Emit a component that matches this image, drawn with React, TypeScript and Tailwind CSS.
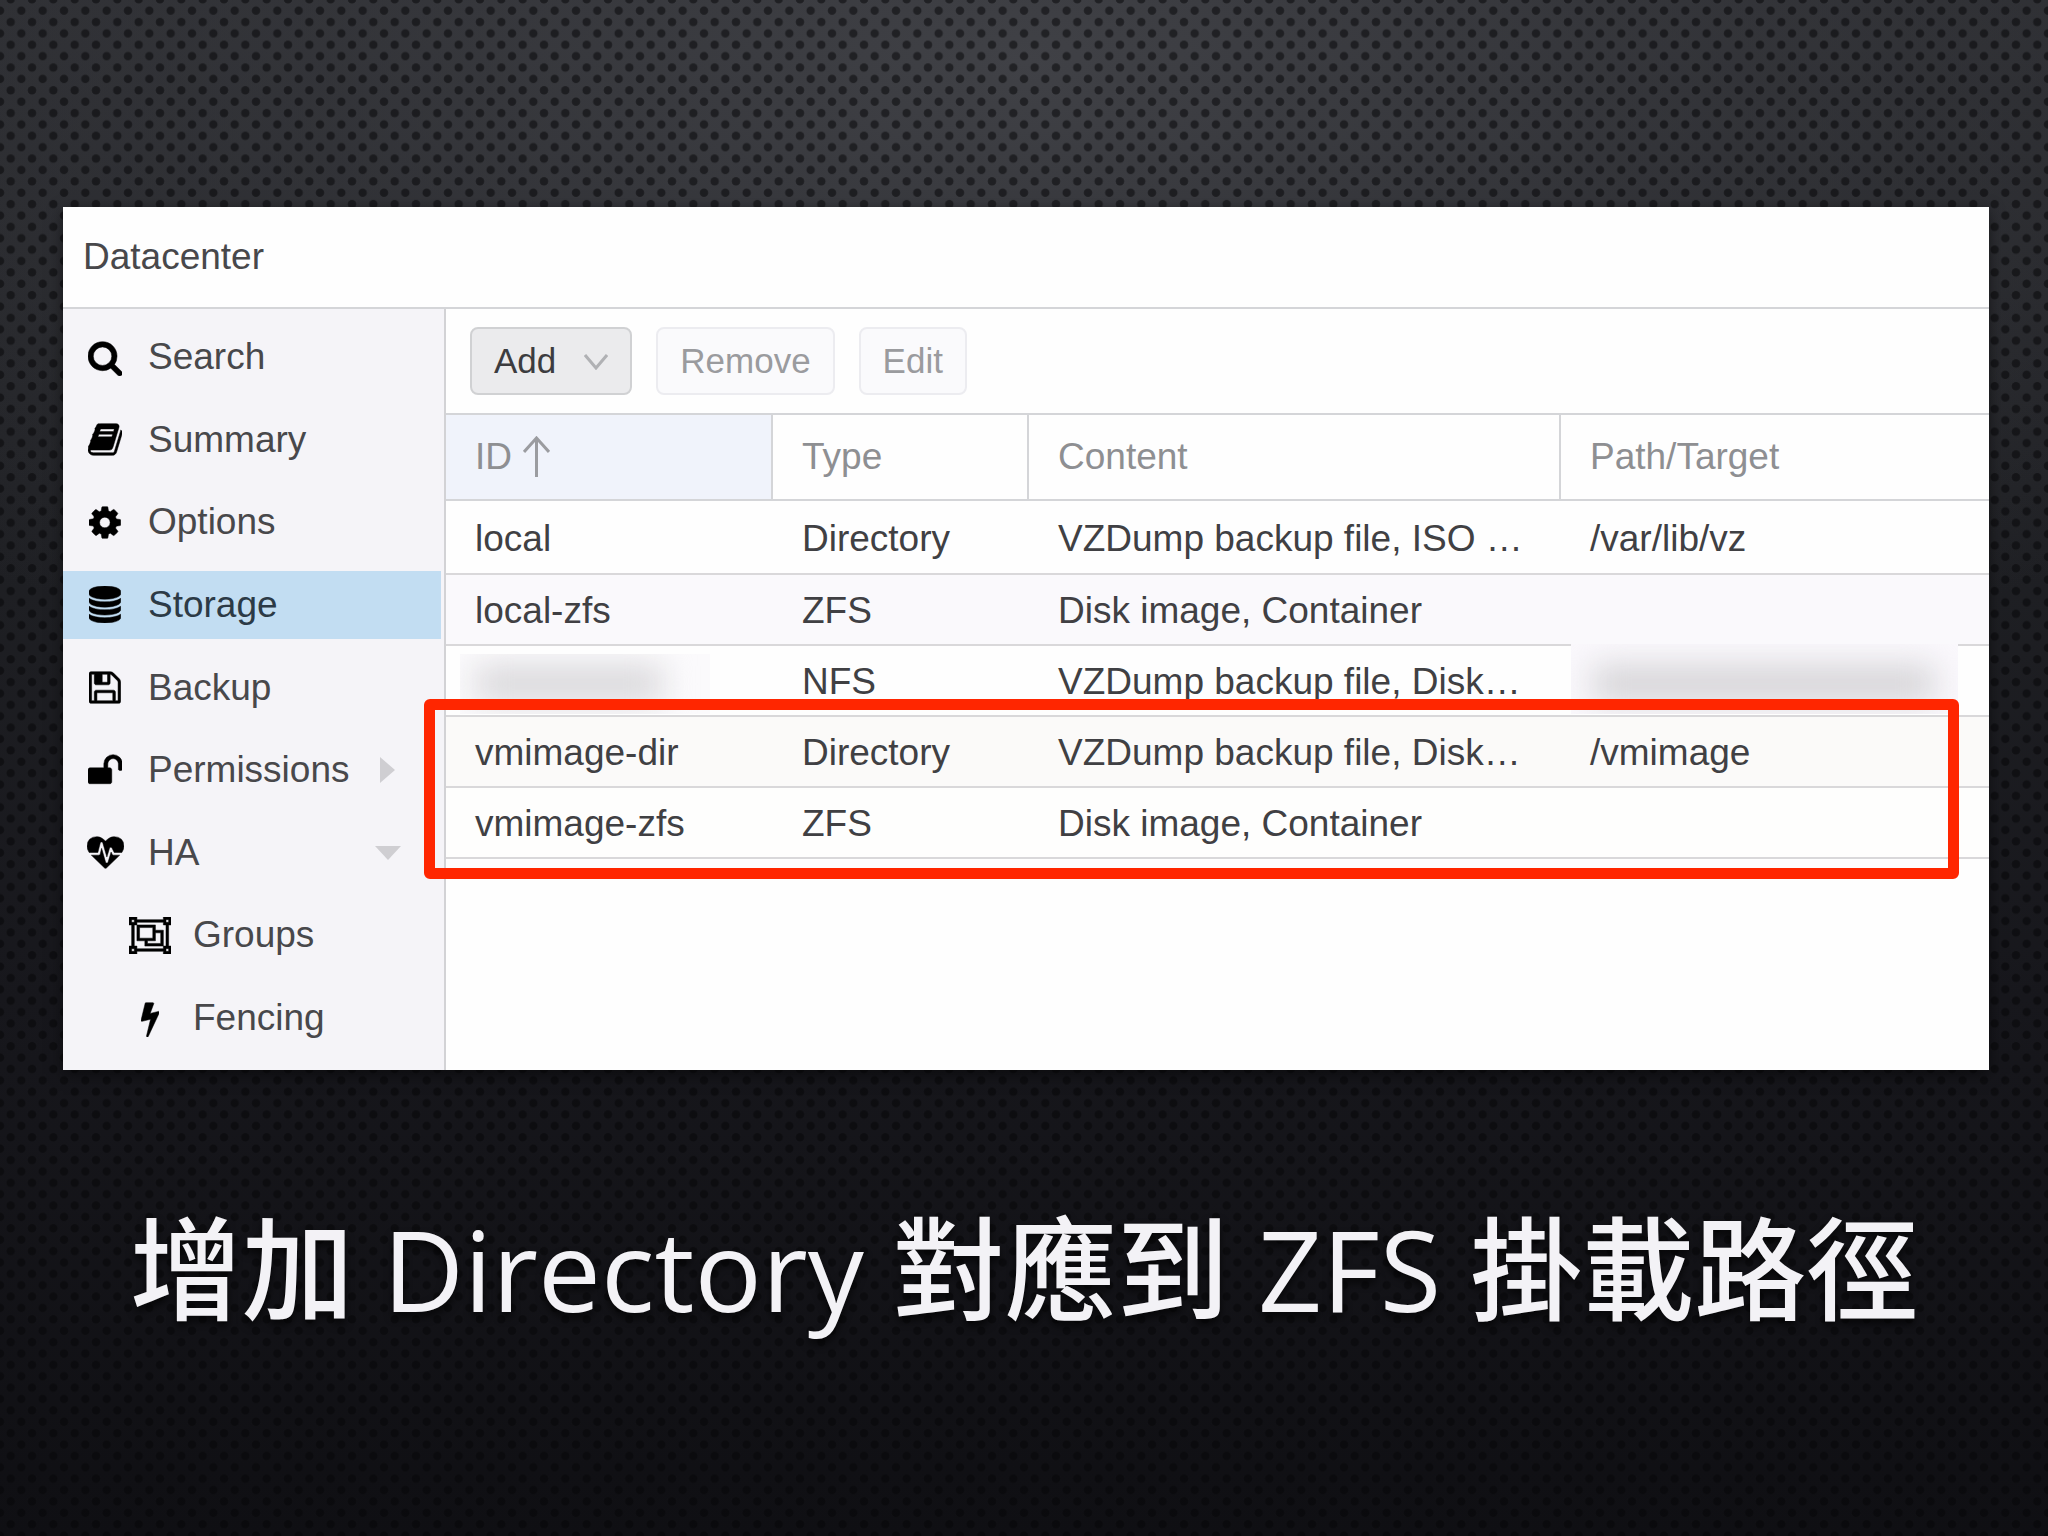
import React from 'react';

type Icon = React.FC<{ className?: string }>;

interface NavItem {
  label: string;
  icon: Icon;
  child?: boolean;
  active?: boolean;
  arrow?: 'right' | 'down';
}

// Font Awesome 4 outlines use a y-up coordinate system, hence the flip
const glyph = (d: string, width: number) => {
  const Glyph: Icon = ({ className }) => (
    <svg viewBox={`0 -1536 ${width} 1792`} height={37} width={(37 * width) / 1792} className={className} fill="currentColor" stroke="currentColor" strokeWidth="24" aria-hidden="true">
      <path transform="scale(1,-1)" d={d} />
    </svg>
  );
  return Glyph;
};

const SearchIcon = glyph('M1152 704q0 185 -131.5 316.5t-316.5 131.5t-316.5 -131.5t-131.5 -316.5t131.5 -316.5t316.5 -131.5t316.5 131.5t131.5 316.5zM1664 -128q0 -52 -38 -90t-90 -38q-54 0 -90 38l-343 342q-179 -124 -399 -124q-143 0 -273.5 55.5t-225 150t-150 225t-55.5 273.5t55.5 273.5t150 225t225 150t273.5 55.5t273.5 -55.5t225 -150t150 -225t55.5 -273.5q0 -220 -124 -399l343 -343q37 -37 37 -90z', 1664);
const BookIcon = glyph('M1639 1058q40 -57 18 -129l-275 -906q-19 -64 -76.5 -107.5t-122.5 -43.5h-923q-77 0 -148.5 53.5t-99.5 131.5q-24 67 -2 127q0 4 3 27t4 37q1 8 -3 21.5t-3 19.5q2 11 8 21t16.5 23.5t16.5 23.5q23 38 45 91.5t30 91.5q3 10 0.5 30t-0.5 28q3 11 17 28t17 23q21 36 42 92t25 90q1 9 -2.5 32t0.5 28q4 13 22 30.5t22 22.5q19 26 42.5 84.5t27.5 96.5q1 8 -3 25.5t-2 26.5q2 8 9 18t18 23t17 21q8 12 16.5 30.5t15 35t16 36t19.5 32t26.5 23.5t36 11.5t47.5 -5.5l-1 -3q38 9 51 9h761q74 0 114 -56t18 -130l-274 -906q-36 -119 -71.5 -153.5t-128.5 -34.5h-869q-27 0 -38 -15q-11 -16 -1 -43q24 -70 144 -70h923q29 0 56 15.5t35 41.5l300 987q7 22 5 57q38 -15 59 -43zM575 1056q-4 -13 2 -22.5t20 -9.5h608q13 0 25.5 9.5t16.5 22.5l21 64q4 13 -2 22.5t-20 9.5h-608q-13 0 -25.5 -9.5t-16.5 -22.5zM492 800q-4 -13 2 -22.5t20 -9.5h608q13 0 25.5 9.5t16.5 22.5l21 64q4 13 -2 22.5t-20 9.5h-608q-13 0 -25.5 -9.5t-16.5 -22.5z', 1664);
const CogIcon = glyph('M1024 640q0 106 -75 181t-181 75t-181 -75t-75 -181t75 -181t181 -75t181 75t75 181zM1536 749v-222q0 -12 -8 -23t-20 -13l-185 -28q-19 -54 -39 -91q35 -50 107 -138q10 -12 10 -25t-9 -23q-27 -37 -99 -108t-94 -71q-12 0 -26 9l-138 108q-44 -23 -91 -38q-16 -136 -29 -186q-7 -28 -36 -28h-222q-14 0 -24.5 8.5t-11.5 21.5l-28 184q-49 16 -90 37l-141 -107q-10 -9 -25 -9q-14 0 -25 11q-126 114 -165 168q-7 10 -7 23q0 12 8 23q15 21 51 66.5t54 70.5q-27 50 -41 99l-183 27q-13 2 -21 12.5t-8 23.5v222q0 12 8 23t19 13l186 28q14 46 39 92q-40 57 -107 138q-10 12 -10 24q0 10 9 23q26 36 98.5 107.5t94.5 71.5q13 0 26 -10l138 -107q44 23 91 38q16 136 29 186q7 28 36 28h222q14 0 24.5 -8.5t11.5 -21.5l28 -184q49 -16 90 -37l142 107q9 9 24 9q13 0 25 -10q129 -119 165 -170q7 -8 7 -22q0 -12 -8 -23q-15 -21 -51 -66.5t-54 -70.5q26 -50 41 -98l183 -28q13 -2 21 -12.5t8 -23.5z', 1536);
const DatabaseIcon = glyph('M768 768q237 0 443 43t325 127v-170q0 -69 -103 -128t-280 -93.5t-385 -34.5t-385 34.5t-280 93.5t-103 128v170q119 -84 325 -127t443 -43zM768 0q237 0 443 43t325 127v-170q0 -69 -103 -128t-280 -93.5t-385 -34.5t-385 34.5t-280 93.5t-103 128v170q119 -84 325 -127t443 -43zM768 384q237 0 443 43t325 127v-170q0 -69 -103 -128t-280 -93.5t-385 -34.5t-385 34.5t-280 93.5t-103 128v170q119 -84 325 -127t443 -43zM768 1536q208 0 385 -34.5t280 -93.5t103 -128v-128q0 -69 -103 -128t-280 -93.5t-385 -34.5t-385 34.5t-280 93.5t-103 128v128q0 69 103 128t280 93.5t385 34.5z', 1536);
const FloppyIcon = glyph('M384 0h768v384h-768v-384zM1280 0h128v896q0 14 -10 38.5t-20 34.5l-281 281q-10 10 -34 20t-39 10v-416q0 -40 -28 -68t-68 -28h-576q-40 0 -68 28t-28 68v416h-128v-1280h128v416q0 40 28 68t68 28h832q40 0 68 -28t28 -68v-416zM896 928v320q0 13 -9.5 22.5t-22.5 9.5h-192q-13 0 -22.5 -9.5t-9.5 -22.5v-320q0 -13 9.5 -22.5t22.5 -9.5h192q13 0 22.5 9.5t9.5 22.5zM1536 896v-928q0 -40 -28 -68t-68 -28h-1344q-40 0 -68 28t-28 68v1344q0 40 28 68t68 28h928q40 0 88 -20t76 -48l280 -280q28 -28 48 -76t20 -88z', 1536);
const UnlockIcon = glyph('M1664 960v-256q0 -26 -19 -45t-45 -19h-64q-26 0 -45 19t-19 45v256q0 106 -75 181t-181 75t-181 -75t-75 -181v-192h96q40 0 68 -28t28 -68v-576q0 -40 -28 -68t-68 -28h-960q-40 0 -68 28t-28 68v576q0 40 28 68t68 28h672v192q0 185 131.5 316.5t316.5 131.5t316.5 -131.5t131.5 -316.5z', 1664);
const HeartbeatIcon = glyph('M1280 512h305q-5 -6 -10 -10.5t-9 -7.5l-3 -4l-623 -600q-18 -18 -44 -18t-44 18l-624 602q-5 2 -21 20h369q22 0 39.5 13.5t22.5 34.5l70 281l190 -667q6 -20 23 -33t39 -13q21 0 38 13t23 33l146 485l56 -112q18 -35 57 -35zM1792 940q0 -145 -103 -300h-369l-111 221q-8 17 -25.5 27t-36.5 8q-45 -5 -56 -46l-129 -430l-196 686q-6 20 -23.5 33t-39.5 13t-39 -13.5t-22 -34.5l-116 -464h-423q-103 155 -103 300q0 220 127 344t351 124q62 0 126.5 -21.5t120 -58t95.5 -68.5t76 -68q36 36 76 68t95.5 68.5t120 58t126.5 21.5q224 0 351 -124t127 -344z', 1792);
const GroupIcon = glyph('M2048 1152h-128v-1024h128v-384h-384v128h-1280v-128h-384v384h128v1024h-128v384h384v-128h1280v128h384v-384zM1792 1408v-128h128v128h-128zM128 1408v-128h128v128h-128zM256 -128v128h-128v-128h128zM1664 0v128h128v1024h-128v128h-1280v-128h-128v-1024h128v-128h1280zM1920 -128v128h-128v-128h128zM1280 896h384v-768h-896v256h-384v768h896v-256zM512 512h640v512h-640v-512zM1536 256v512h-256v-384h-384v-128h640z', 2048);
const BoltIcon = glyph('M885 970q18 -20 7 -44l-540 -1157q-13 -25 -42 -25q-4 0 -14 2q-17 5 -25.5 19t-4.5 30l197 808l-406 -101q-4 -1 -12 -1q-18 0 -31 11q-18 15 -13 39l201 825q4 14 16 23t28 9h328q19 0 32 -12.5t13 -29.5q0 -8 -5 -18l-171 -463l396 98q8 2 12 2q19 0 34 -15z', 896);

const navItems: NavItem[] = [
  { label: 'Search', icon: SearchIcon },
  { label: 'Summary', icon: BookIcon },
  { label: 'Options', icon: CogIcon },
  { label: 'Storage', icon: DatabaseIcon, active: true },
  { label: 'Backup', icon: FloppyIcon },
  { label: 'Permissions', icon: UnlockIcon, arrow: 'right' },
  { label: 'HA', icon: HeartbeatIcon, arrow: 'down' },
  { label: 'Groups', icon: GroupIcon, child: true },
  { label: 'Fencing', icon: BoltIcon, child: true },
];

const rows = [
  { id: 'local', type: 'Directory', content: 'VZDump backup file, ISO …', path: '/var/lib/vz', tone: 'h-[74px] bg-[#fefefe]' },
  { id: 'local-zfs', type: 'ZFS', content: 'Disk image, Container', path: '', tone: 'h-[71px] bg-[#faf9fc]' },
  { id: '', type: 'NFS', content: 'VZDump backup file, Disk…', path: '', redacted: true, tone: 'h-[71px] bg-[#fefefe]' },
  { id: 'vmimage-dir', type: 'Directory', content: 'VZDump backup file, Disk…', path: '/vmimage', tone: 'h-[71px] bg-[#fbfaf9]' },
  { id: 'vmimage-zfs', type: 'ZFS', content: 'Disk image, Container', path: '', tone: 'h-[71px] bg-[#fefefd]' },
];

// perforated metal sheet
const Texture: React.FC = () => (
  <svg className="absolute inset-0 w-full h-full" aria-hidden="true">
    <defs>
      <pattern id="holes" width="21.333" height="22.76" patternUnits="userSpaceOnUse">
        <g fill="#050508" fillOpacity="0.52">
          <circle cx="10.67" cy="22" r="4.2" />
          <circle cx="10.67" cy="-0.76" r="4.2" />
          <circle cx="0" cy="10.62" r="4.2" />
          <circle cx="21.333" cy="10.62" r="4.2" />
        </g>
      </pattern>
    </defs>
    <rect width="100%" height="100%" fill="url(#holes)" />
  </svg>
);

const Sidebar: React.FC = () => (
  <nav className="w-[383px] shrink-0 flex flex-col justify-between pt-[14px] pb-[18px] pr-[3px] bg-[#f5f4f8] border-r-2 border-[#d2d2d5]">
    {navItems.map(({ label, icon: Icon, child, active, arrow }) => (
      <a
        key={label}
        href="#"
        className={`flex items-center h-[68px] pr-10 ${child ? 'pl-16' : 'pl-[19px]'} ${active ? 'bg-[#c2ddf2] text-[#2c3a46]' : 'text-[#48484b]'}`}
      >
        <span className="w-[46px] mr-5 flex justify-center text-black">
          <Icon />
        </span>
        <span className="flex-1">{label}</span>
        {arrow === 'right' && (
          <svg width="26" height="26" viewBox="0 0 26 26" fill="#cfced2" aria-hidden="true"><path d="M5 0l15 13L5 26z" /></svg>
        )}
        {arrow === 'down' && (
          <svg width="26" height="26" viewBox="0 0 26 26" fill="#cfced2" aria-hidden="true"><path d="M0 6h26L13 20z" /></svg>
        )}
      </a>
    ))}
  </nav>
);

const Toolbar: React.FC = () => (
  <div className="flex items-center h-[106px] pl-6 text-[35px] border-b-2 border-[#d4d5d8]">
    <button className="flex items-center h-[68px] px-[22px] mr-6 rounded-lg border-2 border-[#d0d1d3] bg-[#ebebed] text-[#3c3c3f]">
      Add
      <svg className="ml-7" width="24" height="18" viewBox="0 0 24 18" fill="none" stroke="#b0b1b4" strokeWidth="3" aria-hidden="true"><path d="M1 3l11 13L23 3" /></svg>
    </button>
    <button disabled className="h-[68px] px-[22px] mr-6 rounded-lg border-2 border-[#ececf0] bg-[#fafafc] text-[#9a9b9e]">Remove</button>
    <button disabled className="h-[68px] px-[22px] rounded-lg border-2 border-[#ececf0] bg-[#fafafc] text-[#9a9b9e]">Edit</button>
  </div>
);

const StorageTable: React.FC = () => (
  <div className="relative">
    <table className="w-full table-fixed border-separate border-spacing-0 text-left whitespace-nowrap">
      <colgroup>
        <col className="w-[327px]" />
        <col className="w-[256px]" />
        <col className="w-[532px]" />
        <col />
      </colgroup>
      <thead>
        <tr className="h-[86px] text-[#8e8f92]">
          <th className="pl-[29px] font-normal bg-[#f0f3fb] border-b-2 border-r-2 border-[#d4d5d8]">
            <span className="flex items-center">
              ID
              <svg className="ml-[11px]" width="27" height="42" viewBox="0 0 27 42" fill="none" stroke="#9b9ca0" strokeWidth="3" aria-hidden="true"><path d="M13.500 41V2M1 16L13.500 2L26 16" /></svg>
            </span>
          </th>
          <th className="pl-[29px] font-normal border-b-2 border-r-2 border-[#d4d5d8]">Type</th>
          <th className="pl-[29px] font-normal border-b-2 border-r-2 border-[#d4d5d8]">Content</th>
          <th className="pl-[29px] font-normal border-b-2 border-[#d4d5d8]">Path/Target</th>
        </tr>
      </thead>
      <tbody className="text-[#404043]">
        {rows.map((row, i) => (
          <tr key={i} className={row.tone}>
            <td className="relative pl-[29px] pt-[3px] border-b-2 border-[#d9d8da]">
              {row.redacted && (
                <span className="absolute top-2 left-[14px] w-[250px] h-[60px] overflow-hidden bg-[#fbfafc]">
                  <span className="absolute top-3 left-4 w-[186px] h-9 bg-[#d8d7da] blur-lg" />
                </span>
              )}
              {row.id}
            </td>
            <td className="pl-[29px] pt-[3px] border-b-2 border-[#d9d8da]">{row.type}</td>
            <td className="pl-[29px] pt-[3px] border-b-2 border-[#d9d8da]">{row.content}</td>
            <td className="relative pl-[29px] pt-[3px] border-b-2 border-[#d9d8da]">
              {row.redacted && (
                <span className="absolute -top-0.5 left-[10px] right-[31px] h-[70px] overflow-hidden bg-[#faf8fc]">
                  <span className="absolute top-[22px] left-[22px] right-6 h-9 bg-[#d4d3d6] blur-lg" />
                </span>
              )}
              {row.path}
            </td>
          </tr>
        ))}
      </tbody>
    </table>
    {/* highlight frame around the two vmimage entries */}
    <div className="absolute top-[284px] -left-[22px] right-[30px] h-[180px] rounded-md border-11 border-[#ff2600]" />
  </div>
);

const App: React.FC = () => {
  return (
    <div className="relative min-h-screen overflow-hidden bg-[#141318] bg-[radial-gradient(ellipse_75%_45%_at_50%_4%,#404146_0%,#3a3b4099_45%,transparent_100%),linear-gradient(to_bottom,#2a2b2f_0%,#1f2024_35%,#17171c_65%,#0f0f13_100%)]">
      <Texture />
      <main className="relative pt-[207px] pb-20 flex flex-col">
        <section className="ml-[63px] mr-[59px] min-h-[863px] flex flex-col bg-[#fefefe] text-[37px] leading-[44px] font-['Liberation_Sans',Arial,sans-serif] shadow-[0_4px_14px_rgba(0,0,0,0.5)]">
          <h2 className="h-[102px] pl-5 flex items-center border-b-2 border-[#d4d5d8] text-[#48484b]">Datacenter</h2>
          <div className="flex flex-1">
            <Sidebar />
            <div className="flex-1 min-w-0">
              <Toolbar />
              <StorageTable />
            </div>
          </div>
        </section>
        <h1 className="mt-[114px] text-center text-[112px] leading-[170px] font-medium whitespace-nowrap text-[#f3f2f6] font-['Open_Sans','Noto_Sans_CJK_TC',sans-serif] [text-shadow:0_5px_8px_rgba(0,0,0,0.7)]">
          增加 Directory 對應到 ZFS 掛載路徑
        </h1>
      </main>
    </div>
  );
};

export default App;
